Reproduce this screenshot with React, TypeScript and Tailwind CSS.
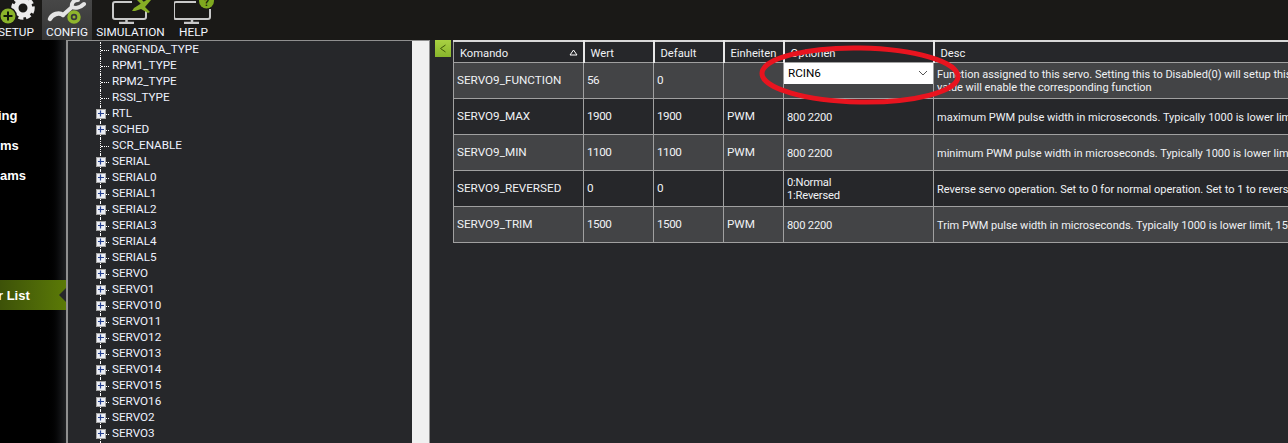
import React from 'react';

const treeItems: { name: string; plus?: boolean }[] = [
  { name: 'RNGFNDA_TYPE' },
  { name: 'RPM1_TYPE' },
  { name: 'RPM2_TYPE' },
  { name: 'RSSI_TYPE' },
  { name: 'RTL', plus: true },
  { name: 'SCHED', plus: true },
  { name: 'SCR_ENABLE' },
  { name: 'SERIAL', plus: true },
  { name: 'SERIAL0', plus: true },
  { name: 'SERIAL1', plus: true },
  { name: 'SERIAL2', plus: true },
  { name: 'SERIAL3', plus: true },
  { name: 'SERIAL4', plus: true },
  { name: 'SERIAL5', plus: true },
  { name: 'SERVO', plus: true },
  { name: 'SERVO1', plus: true },
  { name: 'SERVO10', plus: true },
  { name: 'SERVO11', plus: true },
  { name: 'SERVO12', plus: true },
  { name: 'SERVO13', plus: true },
  { name: 'SERVO14', plus: true },
  { name: 'SERVO15', plus: true },
  { name: 'SERVO16', plus: true },
  { name: 'SERVO2', plus: true },
  { name: 'SERVO3', plus: true },
];

const rows = [
  { cmd: 'SERVO9_FUNCTION', value: '56', def: '0', unit: '', options: '', desc: ['Function assigned to this servo. Setting this to Disabled(0) will setup this output for control by auto missions or MAVLink servo set commands. any other', 'value will enable the corresponding function'] },
  { cmd: 'SERVO9_MAX', value: '1900', def: '1900', unit: 'PWM', options: '800 2200', desc: ['maximum PWM pulse width in microseconds. Typically 1000 is lower limit, 1500 is neutral and 2000 is upper limit.'] },
  { cmd: 'SERVO9_MIN', value: '1100', def: '1100', unit: 'PWM', options: '800 2200', desc: ['minimum PWM pulse width in microseconds. Typically 1000 is lower limit, 1500 is neutral and 2000 is upper limit.'] },
  { cmd: 'SERVO9_REVERSED', value: '0', def: '0', unit: '', options: '0:Normal\n1:Reversed', desc: ['Reverse servo operation. Set to 0 for normal operation. Set to 1 to reverse this output channel.'] },
  { cmd: 'SERVO9_TRIM', value: '1500', def: '1500', unit: 'PWM', options: '800 2200', desc: ['Trim PWM pulse width in microseconds. Typically 1000 is lower limit, 1500 is neutral and 2000 is upper limit.'] },
];

// svg coordinates are page pixels, item left edge is passed through viewBox
const NavItem: React.FC<{ label: string; active?: boolean; left: number; width: string; w: number; className?: string; labelClass?: string; children: React.ReactNode }> = ({ label, active, left, width, w, className, labelClass, children }) => (
  <div className={`${width} h-10 flex flex-col items-center shrink-0 ${active ? 'bg-gradient-to-b from-[#474747] to-[#363636]' : ''} ${className ?? ''}`}>
    <svg width={w} height="24" viewBox={`${left} 0 ${w} 24`} className="shrink-0 block">{children}</svg>
    <span className={`text-[11.8px] leading-[16px] text-[#f2f6ff] whitespace-nowrap ${labelClass ?? ''}`}>{label}</span>
  </div>
);

const TreeRow: React.FC<{ name: string; plus?: boolean }> = ({ name, plus }) => (
  <div className="h-4 flex items-center shrink-0">
    <div className="w-[13px] h-4 relative shrink-0">
      <div className="absolute left-[4px] top-0 bottom-0 border-l border-dotted border-white" />
      <div className="absolute left-[5px] top-[8px] w-[8px] border-t border-dotted border-white" />
      {plus && (
        <div className="absolute left-0 top-[3px] w-[10px] h-[10px] bg-[#eceef4] border border-[#a8a8a8] flex items-center justify-center">
          <svg width="8" height="8" viewBox="0 0 8 8"><path d="M1 3.5h6M3.5 0.5v6" stroke="#24408f" strokeWidth="1.2" /></svg>
        </div>
      )}
    </div>
    <span className="ml-[3px] text-[11.7px] text-[#eef2ff] whitespace-nowrap">{name}</span>
  </div>
);

export default function App() {
  return (
    <div className="w-[1288px] h-[443px] relative overflow-hidden bg-[#26272a] font-['Roboto',sans-serif] flex flex-col">
      <div className="h-10 shrink-0 bg-[#1a1917] flex items-end overflow-hidden">
        <NavItem label="SETUP" left={0} width="w-[42px]" w={42} className="items-start" labelClass="-ml-[2px]">
          <circle cx="23" cy="8" r="10" fill="none" stroke="#ececec" strokeWidth="3.5" strokeDasharray="5 2.6" />
          <circle cx="23" cy="8" r="7" fill="none" stroke="#ececec" strokeWidth="5" />
          <circle cx="8" cy="16" r="9" fill="#1a1917" />
          <circle cx="8" cy="16" r="7.5" fill="#8ab32a" />
          <path d="M3.5 16h9M8 11.5v9" stroke="#10160a" strokeWidth="2" />
        </NavItem>
        <NavItem label="CONFIG" left={42} width="w-[50px]" w={50} active>
          <path d="M50 19c2-5 9-7 13-4" fill="none" stroke="#e4e4e4" strokeWidth="4.5" strokeLinecap="round" />
          <path d="M63 15l9-8 M72 7c-1-4 2-7 6-7 M72 7c4 2 9 0 12-3" fill="none" stroke="#e4e4e4" strokeWidth="4" strokeLinecap="round" />
          <circle cx="74" cy="17" r="5" fill="#3a3a3a" stroke="#8fb52c" strokeWidth="3.5" />
          <circle cx="74" cy="17" r="1.5" fill="#8fb52c" />
        </NavItem>
        <div className="w-[4px] shrink-0" />
        <NavItem label="SIMULATION" left={96} width="w-[69px]" w={69}>
          <path d="M132 2h-17a2 2 0 0 0-2 2v13a2 2 0 0 0 2 2h29a2 2 0 0 0 2-2V9" fill="none" stroke="#c9c9c9" strokeWidth="2" />
          <path d="M126.5 19v4M119 23h15" fill="none" stroke="#c9c9c9" strokeWidth="2.5" />
          <path d="M132 11l2-3 14-9 3 1-6 7 5 5-2 1-7-4-6 2z M137 0h5l3 3-3 2z" fill="#86ad25" />
        </NavItem>
        <div className="w-[10px] shrink-0" />
        <NavItem label="HELP" left={175} width="w-[37px]" w={40} className="overflow-visible">
          <path d="M197 2h-20a2 2 0 0 0-2 2v13a2 2 0 0 0 2 2h32a2 2 0 0 0 2-2V9" fill="none" stroke="#c9c9c9" strokeWidth="2" />
          <path d="M193 19v4M185 23h15" fill="none" stroke="#c9c9c9" strokeWidth="2.5" />
          <circle cx="207.5" cy="1" r="7.5" fill="#7fa91f" />
          <text x="207.5" y="6" textAnchor="middle" fontSize="10" fontWeight="700" fill="#15200a">?</text>
        </NavItem>
      </div>

      <div className="flex-1 flex min-h-0">
        <div className="w-[66px] shrink-0 bg-gradient-to-r from-black from-70% to-[#202124] flex flex-col text-[13px] font-bold text-white font-['Liberation_Sans',sans-serif]">
          <div className="h-[60px] shrink-0" />
          <div className="h-[30px] shrink-0 pt-px flex items-center -ml-[2px]">ing</div>
          <div className="h-[30px] shrink-0 pt-px flex items-center">ms</div>
          <div className="h-[30px] shrink-0 pt-px flex items-center">ams</div>
          <div className="h-[90px] shrink-0" />
          <div className="h-[30px] shrink-0 pt-px relative flex items-center bg-gradient-to-r from-[#3d5208] to-[#5b7a06]">
            <span className="-ml-[2px]">r List</span>
            <div className="absolute right-0 top-[8px] w-0 h-0 border-y-[7px] border-y-transparent border-r-[7px] border-r-[#26272a]" />
          </div>
        </div>
        <div className="w-[2px] shrink-0 bg-[#8f8f8f]" />
        <div className="w-[344px] shrink-0 pl-[28px] pt-px border-t border-t-[#8f8f8f] overflow-hidden flex flex-col">
          {treeItems.map(t => <TreeRow key={t.name} name={t.name} plus={t.plus} />)}
          <div className="h-4 shrink-0 w-[13px] relative">
            <div className="absolute left-[4px] top-0 bottom-0 border-l border-dotted border-white" />
          </div>
        </div>
        <div className="w-[17px] shrink-0 bg-[#f0f0f0] border-t border-t-[#8f8f8f]" />
        <div className="w-px shrink-0 bg-[#8f8f8f]" />
        <div className="flex-1 flex items-start pl-[5px] min-w-0 overflow-hidden">
          <button className="w-[16px] h-[17px] bg-gradient-to-b from-[#a9d142] to-[#88b52c] shrink-0 flex items-center justify-center">
            <svg width="8" height="9" viewBox="0 0 8 9"><path d="M6.5 1L1.5 4.5L6.5 8" fill="none" stroke="#3f5a08" strokeWidth="1" /></svg>
          </button>
          <table className="ml-[2px] table-fixed border-collapse text-[11.7px] text-[#f0f2f5] w-[1100px] shrink-0">
            <colgroup>
              <col className="w-[130px]" />
              <col className="w-[70px]" />
              <col className="w-[70px]" />
              <col className="w-[60px]" />
              <col className="w-[150px]" />
              <col />
            </colgroup>
            <thead>
              <tr className="h-[21px] border-t-2 border-t-[#d8d8d8] bg-[#26272a] text-left text-[11.2px] leading-[14px]">
                <th className="font-normal pl-[6px] pt-[4px] border-l border-l-[#a0a0a0] border-r-2 border-r-[#e8e8e8] relative">
                  Komando
                  <svg width="9" height="7" viewBox="0 0 9 7" className="absolute right-[5px] top-[7px]"><path d="M4.5 1L8 6H1z" fill="none" stroke="#fff" /></svg>
                </th>
                <th className="font-normal pl-[6px] pt-[4px] border-r-2 border-r-[#e8e8e8]">Wert</th>
                <th className="font-normal pl-[6px] pt-[4px] border-r-2 border-r-[#e8e8e8]">Default</th>
                <th className="font-normal pl-[6px] pt-[4px] border-r-2 border-r-[#e8e8e8]">Einheiten</th>
                <th className="font-normal pl-[6px] pt-[4px] border-r-2 border-r-[#e8e8e8]">Optionen</th>
                <th className="font-normal pl-[6px] pt-[4px]">Desc</th>
              </tr>
            </thead>
            <tbody>
              {rows.map((r, i) => (
                <tr key={r.cmd} className={`h-[36px] ${i % 2 === 0 ? 'bg-[#434446]' : 'bg-[#26272a]'}`}>
                  <td className="border border-[#a0a0a0] pl-[3px] pt-[2px] whitespace-nowrap">{r.cmd}</td>
                  <td className="border border-[#a0a0a0] pl-[3px] pt-[2px] tracking-[-0.5px]">{r.value}</td>
                  <td className="border border-[#a0a0a0] pl-[3px] pt-[2px] tracking-[-0.5px]">{r.def}</td>
                  <td className="border border-[#a0a0a0] pl-[3px] pt-[2px]">{r.unit}</td>
                  <td className="border border-[#a0a0a0] pl-[3px] pt-[2px] leading-[13px] whitespace-pre-line align-middle text-[11.2px] tracking-[-0.2px]">
                    {i === 0 ? (
                      <div className="h-[21px] -mt-[16px] -ml-[3px] bg-white text-black text-[11.7px] tracking-normal flex items-center justify-between pl-[4px] pr-[5px]">
                        RCIN6
                        <svg width="10" height="6" viewBox="0 0 10 6"><path d="M1 1l4 4 4-4" fill="none" stroke="#555" /></svg>
                      </div>
                    ) : r.options}
                  </td>
                  <td className="border border-[#a0a0a0] pl-[3px] pt-[2px] leading-[13px] text-[11px] whitespace-nowrap overflow-hidden">
                    {r.desc.map(d => <div key={d}>{d}</div>)}
                  </td>
                </tr>
              ))}
            </tbody>
          </table>
        </div>
      </div>

      <svg width="210" height="66" viewBox="0 0 210 66" className="absolute left-[755px] top-[42px] pointer-events-none">
        <ellipse cx="105" cy="33" rx="98" ry="27" fill="none" stroke="#e8141f" strokeWidth="5" transform="rotate(1 105 33)" />
      </svg>
    </div>
  );
}
